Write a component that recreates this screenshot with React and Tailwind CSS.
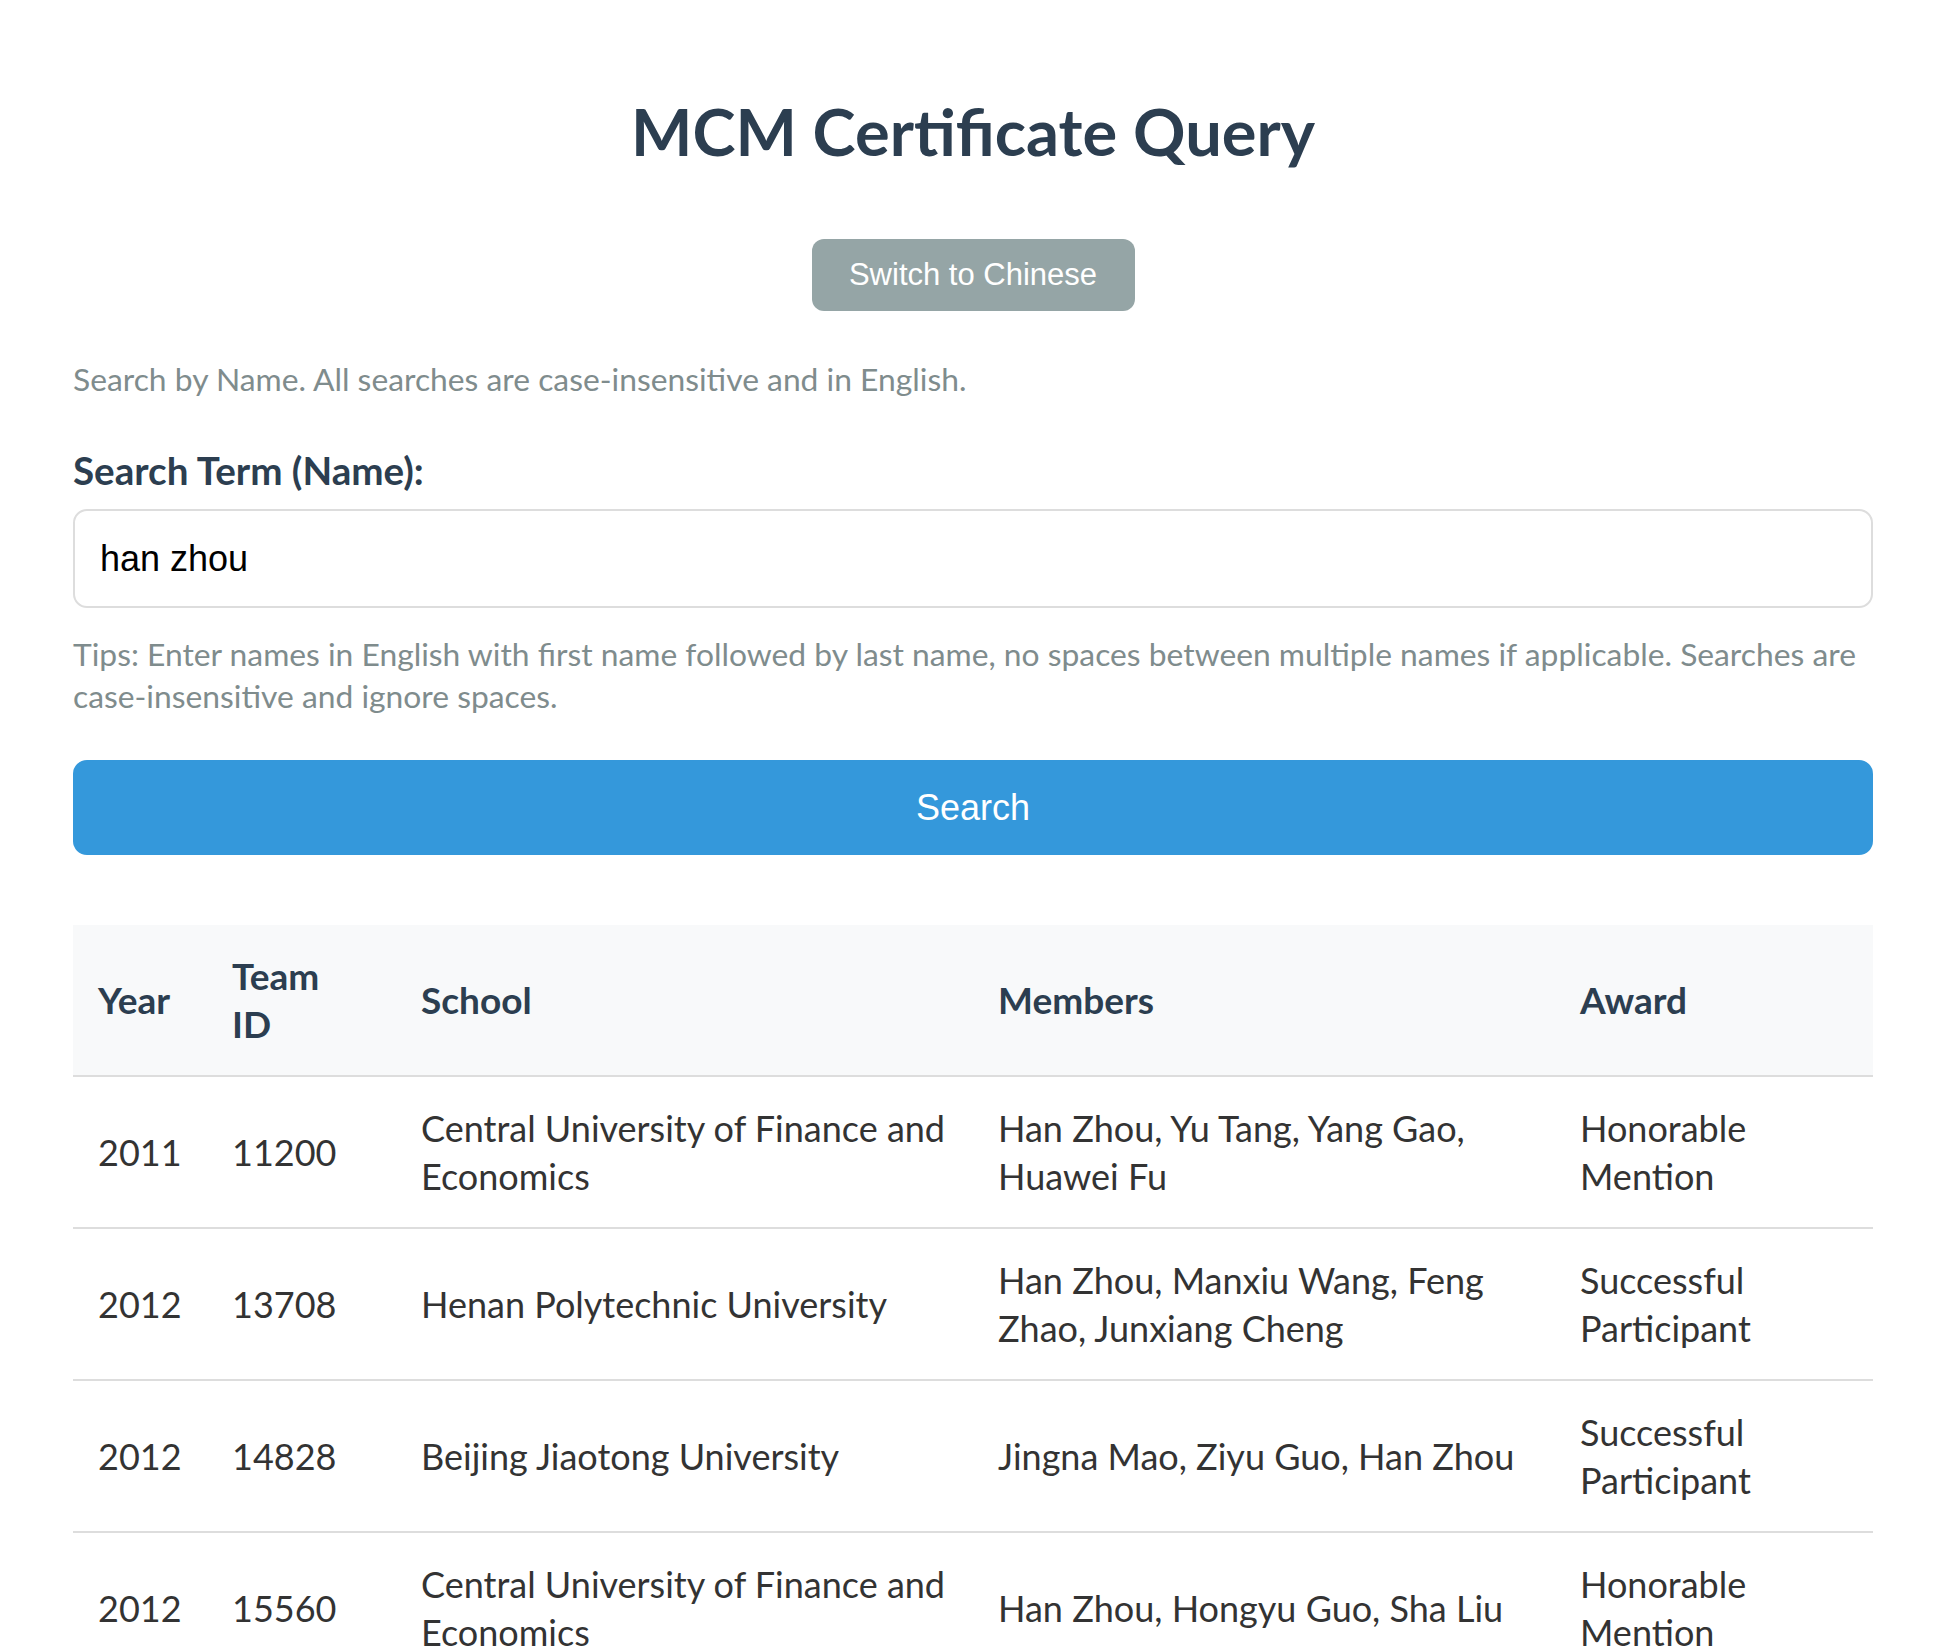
export default function App() {
  const rows = [
    ["2011", "11200", "Central University of Finance and Economics", "Han Zhou, Yu Tang, Yang Gao, Huawei Fu", "Honorable Mention"],
    ["2012", "13708", "Henan Polytechnic University", "Han Zhou, Manxiu Wang, Feng Zhao, Junxiang Cheng", "Successful Participant"],
    ["2012", "14828", "Beijing Jiaotong University", "Jingna Mao, Ziyu Guo, Han Zhou", "Successful Participant"],
    ["2012", "15560", "Central University of Finance and Economics", "Han Zhou, Hongyu Guo, Sha Liu", "Honorable Mention"],
  ];
  return (
    <div className="min-h-screen bg-white font-['Lato',sans-serif]">
      <div className="ml-[73px] w-[1800px] pt-[90px] pb-[60px]">
        <h1 className="text-center text-[65px] leading-[82px] font-bold text-[#2c3e50]">MCM Certificate Query</h1>
        <div className="mt-[67px] flex justify-center">
          <button className="w-[323px] h-[72px] rounded-[12px] bg-[#95a5a6] text-white text-[31px] font-['Liberation_Sans',Arial,sans-serif]">
            Switch to Chinese
          </button>
        </div>
        <p className="mt-[47px] text-[31.8px] leading-[42px] text-[#7f8c8d]">
          Search by Name. All searches are case-insensitive and in English.
        </p>
        <label className="block mt-[46px] text-[38.6px] leading-[48px] font-bold text-[#2c3e50]">Search Term (Name):</label>
        <input
          readOnly
          value="han zhou"
          className="mt-[15px] block w-full h-[99px] border-2 border-[#dddddd] rounded-[14px] px-[25px] text-[36px] text-black font-['Liberation_Sans',Arial,sans-serif] outline-none"
        />
        <p className="mt-[25px] text-[31.8px] leading-[42px] text-[#7f8c8d]">
          Tips: Enter names in English with first name followed by last name, no spaces between multiple names if applicable. Searches are case-insensitive and ignore spaces.
        </p>
        <button className="mt-[43px] block w-full h-[95px] rounded-[14px] bg-[#3498db] text-white text-[36px] font-['Liberation_Sans',Arial,sans-serif]">
          Search
        </button>
        <table className="mt-[70px] w-full table-fixed border-collapse text-[36px] leading-[48px]">
          <colgroup>
            <col className="w-[134px]" />
            <col className="w-[189px]" />
            <col className="w-[577px]" />
            <col className="w-[582px]" />
            <col className="w-[318px]" />
          </colgroup>
          <thead>
            <tr className="bg-[#f8f9fa] border-b-2 border-[#dddddd]">
              {["Year", "Team ID", "School", "Members", "Award"].map((h) => (
                <th key={h} className="px-[25px] py-[27px] text-left align-middle text-[37px] font-bold text-[#2c3e50]">
                  {h === "Team ID" ? (<>Team<br />ID</>) : h}
                </th>
              ))}
            </tr>
          </thead>
          <tbody>
            {rows.map((r, i) => (
              <tr key={i} className="border-b-2 border-[#dddddd]">
                {r.map((c, j) => (
                  <td key={j} className="px-[25px] py-[27px] align-middle text-[#333333]">{c}</td>
                ))}
              </tr>
            ))}
          </tbody>
        </table>
      </div>
    </div>
  );
}
